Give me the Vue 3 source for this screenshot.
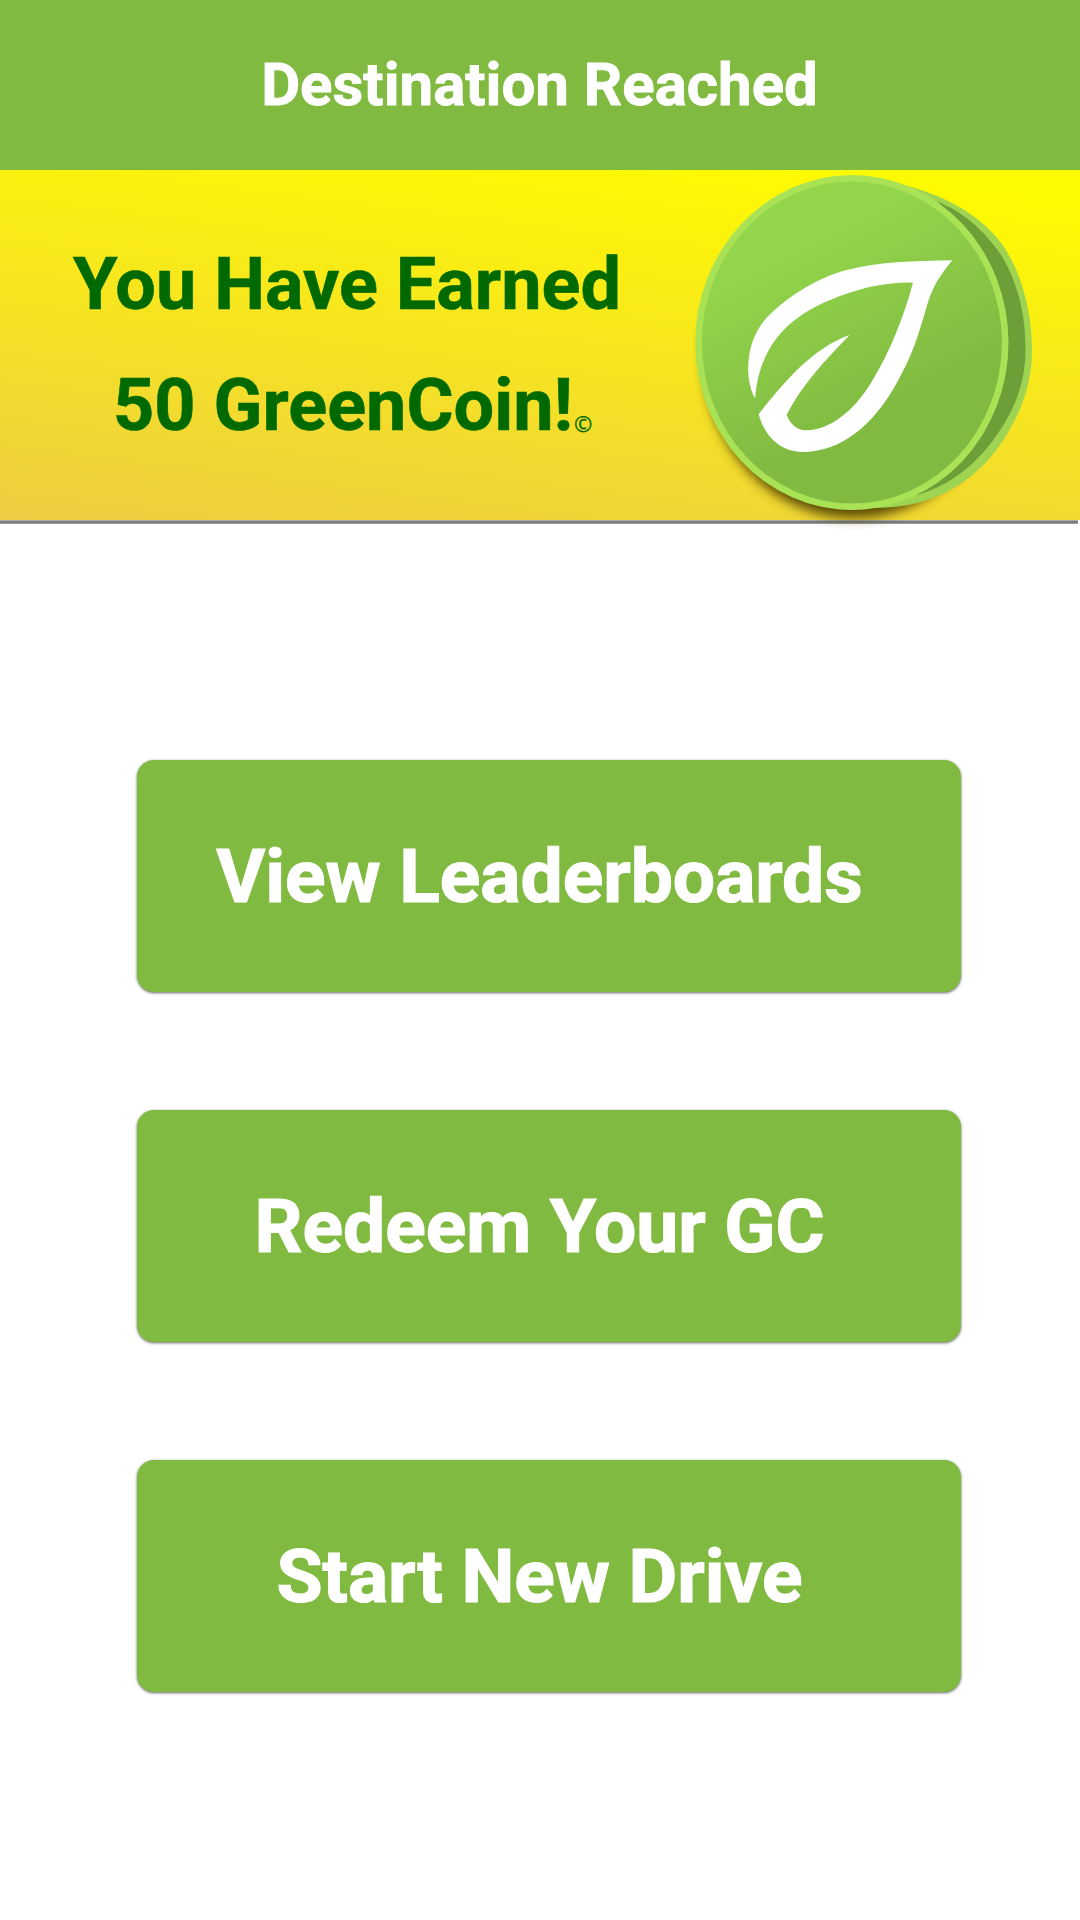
<script setup>
const actions = ['View Leaderboards', 'Redeem Your GC', 'Start New Drive']
</script>

<template>
  <main class="screen">
    <header class="bar"><h1>Destination Reached</h1></header>
    <section class="reward">
      <div class="message">
        <p>You Have Earned</p>
        <p class="second">50 GreenCoin!<span class="mark">©</span></p>
      </div>
      <svg class="coin" viewBox="680 170 400 370" aria-hidden="true">
        <defs>
          <linearGradient id="face" x1="0.34" y1="0.16" x2="0.6" y2="0.72">
            <stop offset="0" stop-color="#93d64b" />
            <stop offset="1" stop-color="#81ba41" />
          </linearGradient>
          <filter id="soft" x="-20%" y="-20%" width="140%" height="140%"><feGaussianBlur stdDeviation="6" /></filter>
        </defs>
        <ellipse cx="854" cy="356" rx="150" ry="162" fill="#4a3a00" opacity=".9" filter="url(#soft)" />
        <path fill="#9fd452" d="M895 183C925 189 977 207 1004 247C1023 276 1032 315 1032 350C1032 375 1026 402 1010 429C985 475 940 508 875 508L850 350Z" />
        <path fill="#6d9e37" d="M938 202C960 210 985 230 1003 258C1018 284 1025.5 315 1025.5 350C1025.5 375 1019 397 1008 417C990 450 960 483 917 495L900 350Z" />
        <ellipse cx="851.9" cy="342.5" rx="156.6" ry="167.5" fill="#aae256" />
        <ellipse cx="851.9" cy="342.5" rx="150" ry="161" fill="url(#face)" />
        <g transform="translate(680 160) scale(.33333)" fill="#fff">
          <path d="M225 715C208 685 203 645 205 615C207 565 220 525 250 485C300 425 410 350 510 328C600 306 700 303 817 301C780 346 757 382 743 430C715 525 702 575 655 660C580 800 480 876 368 876C295 876 250 820 236 762C310 670 395 565 509 525C440 597 370 668 320 764C332 797 355 811 380 811C450 809 520 755 575 665C630 575 670 475 699 368C600 362 455 405 365 465C280 522 235 602 225 715Z" />
        </g>
      </svg>
    </section>
    <nav class="actions">
      <button v-for="label in actions" :key="label" type="button">{{ label }}</button>
    </nav>
  </main>
</template>

<style>
body { margin: 0; background: #fff; }
</style>

<style scoped>
.screen { width: 1080px; height: 1920px; background: #fff; font-family: Roboto, sans-serif; font-weight: 700; overflow: hidden; }
.bar { height: 170px; background: #81ba41; display: flex; justify-content: center; box-sizing: border-box; padding: 50px 1px 0 0; }
h1 { margin: 0; font-size: 60px; line-height: 70px; color: #fff; white-space: nowrap; -webkit-text-stroke: 0.8px #fff; }
.reward {
  height: 354px;
  display: flex;
  justify-content: space-between;
  background:
    linear-gradient(#aaa 1px, #7e7e7e 1px, #7e7e7e 3px, #999 3px) 0 350px / 1078px 4px no-repeat,
    linear-gradient(187deg, #fffb00 0%, #fffb00 6%, #edcd42 100%) 0 0 / 100% 350px no-repeat;
}
.message { padding: 54px 0 0 73px; color: #006a00; font-size: 72px; line-height: 121px; white-space: nowrap; -webkit-text-stroke: 0.6px #006a00; }
p { margin: 0; }
.second { padding-left: 40px; }
.mark { font-family: "Open Sans", sans-serif; font-size: 22px; font-weight: 400; position: relative; top: 2px; margin-left: 1px; -webkit-text-stroke: 0.3px #006a00; }
.coin { width: 400px; height: 370px; flex: none; }
.actions { display: flex; flex-direction: column; gap: 118px; padding: 236px 0 0 137px; }
button { width: 824px; height: 232px; border: 0; border-radius: 17px; background: #81ba41; color: #fff; font: 700 75px/90px Roboto, sans-serif; padding: 0 19px 1px 0; box-shadow: 0 1px 3px rgba(0, 0, 0, .6); -webkit-text-stroke: 1.2px #fff; }
</style>
